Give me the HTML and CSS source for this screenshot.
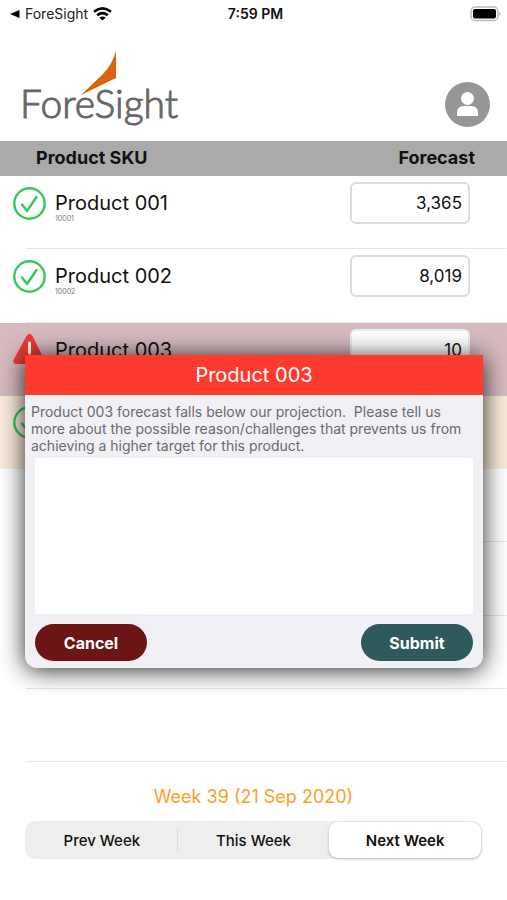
FILE: index.html
```html
<!DOCTYPE html>
<html lang="en">
<head>
  <meta charset="UTF-8" />
  <meta name="viewport" content="width=device-width, initial-scale=1" />
  <title>ForeSight</title>
  <link rel="stylesheet" href="styles.css">
</head>
<body>
  <div class="status-bar">
    <a class="back" href="#">
      <svg width="10" height="8" viewBox="0 0 10 8"><path d="M0 4 9.500 0v8z"/></svg>
      ForeSight
      <svg width="19" height="14" viewBox="0 0 19 14" fill="none" stroke="#000" stroke-width="2.600"><path d="M1 4.800Q9.500-2 18 4.800M4.200 8.300Q9.500 4 14.800 8.300"/><path d="M9.500 13.500 6.300 10.600Q9.500 8.200 12.700 10.600z" fill="#000" stroke="none"/></svg>
    </a>
    <span class="time">7:59 PM</span>
    <svg class="battery" width="32" height="16" viewBox="0 0 32 16"><rect x="2" y="1" width="27" height="13.500" rx="4" fill="#fff" stroke="#bbb" stroke-width="1.500"/><rect x="4" y="3" width="23" height="9.500" rx="2"/><path d="M30.500 5.500q2 2.300 0 4.500z" fill="#999"/></svg>
  </div>

  <header class="header">
    <div class="logo">
      <svg class="flame" width="36" height="44" viewBox="0 0 36 44"><path d="M35 0Q31 14 22 23L0 44 35 27z" fill="#d9650f"/></svg>
      ForeSight
    </div>
    <button class="profile" type="button" aria-label="Profile">
      <svg width="45" height="45" viewBox="0 0 45 45"><circle cx="22.500" cy="22.500" r="22.500" fill="#969696"/><circle cx="22.500" cy="16.500" r="6.500" fill="#fff"/><path d="M12 34v-3q0-7 7-7h7q7 0 7 7v3z" fill="#fff"/></svg>
    </button>
  </header>

  <main>
    <table class="products">
      <thead>
        <tr><th>Product SKU</th><th class="num">Forecast</th></tr>
      </thead>
      <tbody>
        <tr>
          <td>
            <div class="product">
              <svg class="icon" viewBox="0 0 33 33"><circle cx="16.500" cy="16.500" r="15.200"/><path d="M9 17.500l5 6.500L23.500 10"/></svg>
              <div><label for="p1">Product 001</label><small>10001</small></div>
            </div>
          </td>
          <td class="num"><input id="p1" type="text" value="3,365"></td>
        </tr>
        <tr>
          <td>
            <div class="product">
              <svg class="icon" viewBox="0 0 33 33"><circle cx="16.500" cy="16.500" r="15.200"/><path d="M9 17.500l5 6.500L23.500 10"/></svg>
              <div><label for="p2">Product 002</label><small>10002</small></div>
            </div>
          </td>
          <td class="num"><input id="p2" type="text" value="8,019"></td>
        </tr>
        <tr class="low">
          <td>
            <div class="product">
              <svg class="icon alert" viewBox="0 0 33 33"><path d="M13.500 3q3-4.500 6 0L31 26q2 5-3 5H4q-5 0-3-5z"/><path class="mark" d="M16.500 10v10M16.500 24v3"/></svg>
              <div><label for="p3">Product 003</label></div>
            </div>
          </td>
          <td class="num"><input id="p3" type="text" value="10"></td>
        </tr>
        <tr class="pending">
          <td>
            <div class="product">
              <svg class="icon" viewBox="0 0 33 33"><circle cx="16.500" cy="16.500" r="15.200"/><path d="M9 17.500l5 6.500L23.500 10"/></svg>
            </div>
          </td>
          <td></td>
        </tr>
        <tr><td></td><td></td></tr>
        <tr><td></td><td></td></tr>
        <tr><td></td><td></td></tr>
        <tr><td></td><td></td></tr>
      </tbody>
    </table>
  </main>

  <footer>
    <p class="week">Week 39 (21 Sep 2020)</p>
    <div class="segments">
      <button type="button">Prev Week</button>
      <button type="button">This Week</button>
      <button type="button" class="active">Next Week</button>
    </div>
  </footer>

  <form class="modal" role="dialog" aria-labelledby="modalTitle">
    <h2 id="modalTitle">Product 003</h2>
    <div class="modal-body">
      <label for="reason">Product 003 forecast falls below our projection.&nbsp; Please tell us more about the possible reason/challenges that prevents us from achieving a higher target for this product.</label>
      <textarea id="reason"></textarea>
      <div class="actions">
        <button type="button" class="cancel">Cancel</button>
        <button type="submit" class="submit">Submit</button>
      </div>
    </div>
  </form>
</body>
</html>
```

FILE: styles.css
```css
* {
  box-sizing: border-box;
}
body {
  display: flex;
  flex-direction: column;
  margin: 0;
  min-height: 100vh;
  position: relative;
  font-family: Inter, "Liberation Sans", sans-serif;
  color: #111;
  background: #fff;
}
button, input, textarea {
  font-family: inherit;
  color: inherit;
  border: none;
  outline: none;
}
button {
  padding: 0;
  cursor: pointer;
}
.status-bar {
  display: grid;
  grid-template-columns: 1fr auto 1fr;
  align-items: center;
  height: 27px;
  padding: 0 6px 0 10px;
  font-size: 14px;
}
.back {
  display: flex;
  align-items: center;
  gap: 5px;
  color: #222;
  text-decoration: none;
}
.time {
  font-weight: 600;
}
.battery {
  justify-self: end;
}
.header {
  display: flex;
  justify-content: space-between;
  align-items: flex-end;
  height: 114px;
  padding: 0 17px 14px 20px;
}
.logo {
  position: relative;
  font-family: Lato, sans-serif;
  font-weight: 300;
  font-size: 39px;
  line-height: 48px;
  color: #666;
  -webkit-text-stroke: 1px #666;
}
.flame {
  position: absolute;
  left: 61px;
  bottom: 32px;
}
.profile {
  width: 45px;
  height: 45px;
  background: none;
}
main {
  display: flex;
  flex: 1;
}
.products {
  width: 100%;
  border-collapse: collapse;
}
.products th {
  height: 35px;
  padding: 0 0 3px 36px;
  background: #aaa;
  font-size: 18px;
  font-weight: 700;
  text-align: left;
}
.products th.num {
  padding: 0 32px 3px 0;
  text-align: right;
}
.products tbody tr {
  height: 73px;
  background: linear-gradient(#e6e6e6, #e6e6e6) right bottom / calc(100% - 26px) 1px no-repeat;
}
.products tbody .low {
  background: #d6bac0;
}
.products tbody .pending {
  background: #faebdb;
}
.products td {
  padding: 6px 0 0 13px;
  vertical-align: top;
}
.products td.num {
  padding: 6px 37px 0 0;
  text-align: right;
}
.product {
  display: flex;
  align-items: center;
  gap: 9px;
  height: 42px;
}
.product label {
  display: block;
  font-size: 20px;
  line-height: 24px;
}
.product small {
  display: block;
  margin-bottom: -8px;
  font-size: 7px;
  line-height: 8px;
  color: #777;
}
.icon {
  width: 33px;
  height: 33px;
  fill: none;
  stroke: #34c759;
  stroke-width: 2.4;
  stroke-linecap: round;
  stroke-linejoin: round;
}
.alert {
  fill: #ee3b35;
  stroke: none;
}
.alert .mark {
  stroke: #fff;
  stroke-width: 3;
}
.products input {
  width: 120px;
  height: 42px;
  padding: 0 6px;
  border: 2px solid #dcdcdc;
  border-radius: 6px;
  background: #fff;
  font-size: 17px;
  text-align: right;
}
.low input {
  border-color: #eee;
}
footer {
  padding-bottom: 41px;
}
.week {
  margin: 0;
  padding: 24px 0 13px;
  font-size: 18px;
  line-height: 22px;
  text-align: center;
  color: #f9a126;
}
.segments {
  display: flex;
  height: 38px;
  margin: 0 25px;
  padding: 1px;
  border-radius: 10px;
  background: #eee;
}
.segments button {
  flex: 1;
  background: none;
  font-size: 15px;
  font-weight: 500;
}
.segments button:first-child {
  background: linear-gradient(#ddd, #ddd) right center / 1px 22px no-repeat;
}
.segments .active {
  border-radius: 9px;
  background: #fff;
  box-shadow: 0 1px 3px rgba(0, 0, 0, 0.25);
  font-weight: 600;
}
.modal {
  position: absolute;
  top: 355px;
  left: 25px;
  right: 24px;
  border-radius: 0 0 12px 12px;
  background: #f1f0f5;
  box-shadow: 0 2px 24px rgba(0, 0, 0, 0.85);
}
.modal h2 {
  margin: 0;
  background: #ff3b30;
  color: #fff;
  font-size: 20px;
  font-weight: 400;
  line-height: 40px;
  text-align: center;
}
.modal-body {
  padding: 8px 10px 7px;
}
.modal-body label {
  display: block;
  margin-left: -4px;
  font-size: 14px;
  line-height: 17px;
  color: #6a6a6e;
}
.modal-body textarea {
  display: block;
  width: 100%;
  height: 156px;
  margin: 4px 0 10px;
  background: #fff;
  resize: none;
}
.actions {
  display: flex;
  justify-content: space-between;
}
.actions button {
  width: 112px;
  height: 37px;
  border-radius: 19px;
  font-size: 16px;
  font-weight: 700;
  color: #fff;
}
.cancel {
  background: #6b1614;
}
.submit {
  background: #2e5a5d;
}
```
